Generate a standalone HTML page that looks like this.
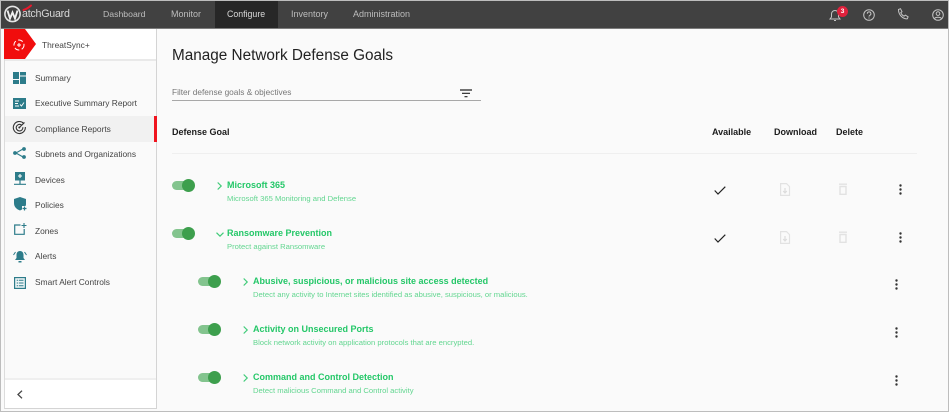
<!DOCTYPE html>
<html>
<head>
<meta charset="utf-8">
<style>
*{box-sizing:border-box}
html,body{margin:0;padding:0;width:950px;height:413px;overflow:hidden;background:#fff;font-family:"Liberation Sans",sans-serif}
.a{position:absolute;white-space:nowrap}
#frame{position:absolute;left:0;top:0;width:949px;height:412px;border:1px solid #bdbdbd;background:#fafafa;overflow:hidden}
.nav{position:absolute;top:8.500px;font-size:9px;line-height:11px;color:#bdbdbd;white-space:nowrap}
.mi{position:absolute;left:35px;font-size:8.4px;line-height:11px;color:#444;white-space:nowrap}
.t{position:absolute;font-size:9px;line-height:12px;font-weight:bold;color:#24c768;white-space:nowrap}
.s{position:absolute;font-size:7.65px;line-height:10px;color:#62d690;white-space:nowrap}
.th{position:absolute;top:127px;font-size:9px;line-height:11px;font-weight:bold;color:#1c1c1c;white-space:nowrap}
.tr{position:absolute;width:24px;height:13px}
.tr i{position:absolute;left:0;top:2px;width:20px;height:9px;border-radius:5px;background:#83c48e}
.tr b{position:absolute;left:10px;top:0;width:13px;height:13px;border-radius:50%;background:#3d9f4d}
svg{position:absolute;overflow:visible}
</style>
</head>
<body>
<div id="frame"></div>
<div class="a" style="left:1px;top:1px;width:947px;height:28px;background:#414141"></div>
<div class="a" style="left:1px;top:28px;width:947px;height:1px;background:#7c7c7c"></div>
<div class="a" style="left:215px;top:1px;width:63px;height:27px;background:#272727"></div>

<svg style="left:4px;top:5px" width="28" height="18" viewBox="0 0 28 18"><circle cx="8.500" cy="9" r="7.600" fill="none" stroke="#e5e5e5" stroke-width="1.600"/><path d="M3.500 5.500l2.500 8 2.500-6 2.500 6 2.500-8" fill="none" stroke="#f0f0f0" stroke-width="1.900"/><path d="M19.500 5Q24 3.500 27 .5" fill="none" stroke="#e8192c" stroke-width="2" stroke-linecap="round"/></svg>
<div class="a" style="left:22px;top:7px;font-size:10.700px;line-height:14px;color:#d8d8d8;letter-spacing:-.25px">atchGuard</div>

<div class="nav" style="left:103px;font-size:8.700px">Dashboard</div>
<div class="nav" style="left:171px">Monitor</div>
<div class="nav" style="left:227px;color:#d8d8d8;font-size:8.800px">Configure</div>
<div class="nav" style="left:291px">Inventory</div>
<div class="nav" style="left:353px">Administration</div>

<svg style="left:828px;top:8px" width="14" height="14" viewBox="0 0 14 14"><path d="M2 11h10l-1.500-2V6a3.500 3.500 0 0 0-7 0v3zM6 12.500h2" fill="none" stroke="#c4c4c4" stroke-width="1"/></svg>
<div class="a" style="left:837px;top:6px;width:11px;height:11px;border-radius:50%;background:#e0213c;color:#fff;font-size:6.500px;line-height:11px;text-align:center;font-weight:bold">3</div>
<svg style="left:863px;top:9px" width="12" height="12" viewBox="0 0 12 12"><circle cx="6" cy="6" r="5.300" fill="none" stroke="#c4c4c4" stroke-width="1"/><path d="M4.300 4.700a1.800 1.800 0 1 1 2.600 1.600c-.6.3-.9.700-.9 1.300M6 8.500v1" fill="none" stroke="#c4c4c4" stroke-width="1"/></svg>
<svg style="left:897px;top:8px" width="13" height="13" viewBox="0 0 13 13"><path d="M1.500 1.500l2-.8 1.500 3-1.200 1c.6 1.500 1.800 2.800 3.300 3.500l1.200-1.100 2.800 1.700-.8 2c-4.600.5-9-4.500-8.800-9.300z" fill="none" stroke="#c4c4c4" stroke-width="1"/></svg>
<svg style="left:932px;top:9px" width="12" height="12" viewBox="0 0 12 12"><circle cx="6" cy="6" r="5.300" fill="none" stroke="#c4c4c4" stroke-width="1"/><circle cx="6" cy="4.600" r="1.800" fill="none" stroke="#c4c4c4" stroke-width="1"/><path d="M2.500 9.500c1-1.700 6-1.700 7 0" fill="none" stroke="#c4c4c4" stroke-width="1"/></svg>

<!-- sidebar -->
<div class="a" style="left:4px;top:29px;width:153px;height:380px;background:#fafafa;border-left:1px solid #dcdcdc;border-right:1px solid #d4d4d4;border-bottom:1px solid #d4d4d4"></div>
<div class="a" style="left:5px;top:29px;width:151px;height:31px;background:#fff"></div>
<div class="a" style="left:5px;top:59px;width:151px;height:2px;background:#e9e9e9"></div>
<svg style="left:4px;top:29px" width="32" height="31" viewBox="0 0 32 31"><path d="M0 0h21l11 15-11 15H0z" fill="#f10d0d"/><circle cx="15" cy="16" r="5" fill="none" stroke="#fff" stroke-width="1" stroke-dasharray="5 2.500"/><path d="M13 16h4M15 14v4" stroke="#fff" stroke-width="1"/></svg>
<div class="a" style="left:42px;top:40px;font-size:8.400px;line-height:11px;color:#444">ThreatSync+</div>

<div class="a" style="left:5px;top:116px;width:150px;height:26px;background:#f1f1f1"></div>
<div class="a" style="left:154px;top:116px;width:3px;height:26px;background:#f0141e"></div>

<div style="position:absolute;left:0;top:0">
<div class="mi" style="top:72.500px">Summary</div>
<div class="mi" style="top:98px">Executive Summary Report</div>
<div class="mi" style="top:123.500px">Compliance Reports</div>
<div class="mi" style="top:149px">Subnets and Organizations</div>
<div class="mi" style="top:174.500px">Devices</div>
<div class="mi" style="top:200px">Policies</div>
<div class="mi" style="top:225.500px">Zones</div>
<div class="mi" style="top:251px">Alerts</div>
<div class="mi" style="top:277px">Smart Alert Controls</div>
</div>

<svg style="left:13px;top:72px" width="13" height="12" viewBox="0 0 13 12"><path d="M0 0h6v7H0zM7 0h6v3.500H7zM0 8h6v4H0zM7 4.500h6V12H7z" fill="#2d7c8a"/></svg>
<svg style="left:13px;top:98px" width="13" height="11" viewBox="0 0 13 11"><rect width="13" height="11" fill="#2d7c8a"/><path d="M2 3h4M2 5.500h3M2 8h4M7 6.500l1.500 1.500L11 4.500" fill="none" stroke="#fff" stroke-width=".9"/></svg>
<svg style="left:13px;top:121px" width="13" height="13" viewBox="0 0 13 13"><path d="M10.500 2.200A6 6 0 1 0 12.300 6M8.500 4a3.300 3.300 0 1 0 1.300 2.200" fill="none" stroke="#333" stroke-width="1.100"/><path d="M6.300 6.500L11.500 1.500" stroke="#333" stroke-width="1.200"/><circle cx="6.300" cy="6.500" r="1" fill="#333"/></svg>
<svg style="left:13px;top:147px" width="14" height="12" viewBox="0 0 14 12"><path d="M2 6h1l7-4M3 6l7 4" fill="none" stroke="#2d7c8a" stroke-width="1.100"/><circle cx="2" cy="6" r="1.900" fill="#2d7c8a"/><circle cx="11" cy="2" r="1.900" fill="#2d7c8a"/><circle cx="11" cy="10" r="1.900" fill="#2d7c8a"/></svg>
<svg style="left:14px;top:172px" width="12" height="13" viewBox="0 0 12 13"><path d="M1 0h10v8.500H1z" fill="#2d7c8a"/><path d="M6 2v4M4 4h4" stroke="#fff" stroke-width="1.100"/><path d="M6 8.500V12M0 12.300h12" stroke="#2d7c8a" stroke-width="1.200"/></svg>
<svg style="left:14px;top:197px" width="14" height="14" viewBox="0 0 14 14"><path d="M6 0l6 2v5c0 1-.2 1.500-.5 2H8v3.500L6 13.500C2 12 0 9.500 0 6V2z" fill="#2d7c8a"/><path d="M10.500 9.500v4M8.500 11.500h4" stroke="#2d7c8a" stroke-width="1.200"/></svg>
<svg style="left:14px;top:223px" width="12" height="12" viewBox="0 0 12 12"><path d="M6.500 2H.7v9.300h9.500V6" fill="none" stroke="#2d7c8a" stroke-width="1.200"/><path d="M10 0v5M7.500 2.500h5" stroke="#2d7c8a" stroke-width="1.100"/></svg>
<svg style="left:13px;top:250px" width="14" height="13" viewBox="0 0 14 13"><path d="M7 1c2.500 0 3.500 2 3.500 4v3l1.500 2H2l1.500-2V5C3.500 3 4.500 1 7 1z" fill="#2d7c8a"/><path d="M5.500 11h3v1.500h-3z" fill="#2d7c8a"/><path d="M2.500 2L.5 5M11.500 2l2 3" stroke="#2d7c8a" stroke-width="1"/></svg>
<svg style="left:13.500px;top:276.500px" width="12" height="12" viewBox="0 0 12 12"><rect x=".6" y=".6" width="10.800" height="10.800" fill="#eef5f6" stroke="#2d7c8a" stroke-width="1.200"/><path d="M2.700 3.300h1.500M2.700 6h1.500M2.700 8.700h1.500M5 3.300h4.500M5 6h4.500M5 8.700h4.500" stroke="#2d7c8a" stroke-width="1"/></svg>

<div class="a" style="left:5px;top:378px;width:151px;height:30px;background:#fff;border-top:2px solid #efefef"></div>
<svg style="left:17px;top:390px" width="6" height="9" viewBox="0 0 6 9"><path d="M5 .7L1 4.500 5 8.300" fill="none" stroke="#444" stroke-width="1.300"/></svg>

<!-- main -->
<div class="a" style="left:172px;top:46px;font-size:15.300px;line-height:20px;color:#222">Manage Network Defense Goals</div>
<div class="a" style="left:172px;top:86.500px;font-size:8.300px;line-height:11px;color:#777">Filter defense goals &amp; objectives</div>
<div class="a" style="left:172px;top:100px;width:309px;height:1px;background:#a8a8a8"></div>
<svg style="left:460px;top:89px" width="12" height="9" viewBox="0 0 12 9"><path d="M0 1h12M2 4.300h8M4.500 7.700h3" stroke="#222" stroke-width="1.200"/></svg>

<div class="th" style="left:172px">Defense Goal</div>
<div class="th" style="left:712px">Available</div>
<div class="th" style="left:774px">Download</div>
<div class="th" style="left:836px">Delete</div>
<div class="a" style="left:172px;top:153px;width:745px;height:1px;background:#efefef"></div>

<div class="tr" style="left:172px;top:179px"><i></i><b></b></div>
<div class="tr" style="left:172px;top:226.500px"><i></i><b></b></div>
<div class="tr" style="left:198px;top:275px"><i></i><b></b></div>
<div class="tr" style="left:198px;top:323px"><i></i><b></b></div>
<div class="tr" style="left:198px;top:371px"><i></i><b></b></div>

<svg style="left:217px;top:182px" width="5" height="8" viewBox="0 0 5 8"><path d="M.7.500l3.500 3.500-3.500 3.500" fill="none" stroke="#3fcb78" stroke-width="1.200"/></svg>
<svg style="left:216px;top:232px" width="8" height="5" viewBox="0 0 8 5"><path d="M.5.700L4 4.200 7.500.7" fill="none" stroke="#3fcb78" stroke-width="1.200"/></svg>
<svg style="left:243px;top:278px" width="5" height="8" viewBox="0 0 5 8"><path d="M.7.500l3.500 3.500-3.500 3.500" fill="none" stroke="#3fcb78" stroke-width="1.200"/></svg>
<svg style="left:243px;top:326px" width="5" height="8" viewBox="0 0 5 8"><path d="M.7.500l3.500 3.500-3.500 3.500" fill="none" stroke="#3fcb78" stroke-width="1.200"/></svg>
<svg style="left:243px;top:374px" width="5" height="8" viewBox="0 0 5 8"><path d="M.7.500l3.500 3.500-3.500 3.500" fill="none" stroke="#3fcb78" stroke-width="1.200"/></svg>

<div class="t" style="left:227px;top:179px">Microsoft 365</div>
<div class="s" style="left:227px;top:194px">Microsoft 365 Monitoring and Defense</div>
<div class="t" style="left:227px;top:227px">Ransomware Prevention</div>
<div class="s" style="left:227px;top:242px">Protect against Ransomware</div>
<div class="t" style="left:253px;top:275px">Abusive, suspicious, or malicious site access detected</div>
<div class="s" style="left:253px;top:290px">Detect any activity to Internet sites identified as abusive, suspicious, or malicious.</div>
<div class="t" style="left:253px;top:323px">Activity on Unsecured Ports</div>
<div class="s" style="left:253px;top:338px">Block network activity on application protocols that are encrypted.</div>
<div class="t" style="left:253px;top:371px">Command and Control Detection</div>
<div class="s" style="left:253px;top:386px">Detect malicious Command and Control activity</div>

<svg style="left:714px;top:186px" width="12" height="9" viewBox="0 0 12 9"><path d="M.7 4.500l3.300 3.500L11.300.7" fill="none" stroke="#222" stroke-width="1.200"/></svg>
<svg style="left:714px;top:234px" width="12" height="9" viewBox="0 0 12 9"><path d="M.7 4.500l3.300 3.500L11.300.7" fill="none" stroke="#222" stroke-width="1.200"/></svg>

<svg style="left:780px;top:182.500px" width="10" height="13" viewBox="0 0 10 13"><path d="M.6.600h5.900l3 3v8.800H.6z" fill="none" stroke="#e2e2e2" stroke-width="1.200"/><path d="M5 5v4.500M3.200 8l1.800 2 1.800-2" fill="none" stroke="#dcdcdc" stroke-width="1.200"/></svg>
<svg style="left:780px;top:230.500px" width="10" height="13" viewBox="0 0 10 13"><path d="M.6.600h5.900l3 3v8.800H.6z" fill="none" stroke="#e2e2e2" stroke-width="1.200"/><path d="M5 5v4.500M3.200 8l1.800 2 1.800-2" fill="none" stroke="#dcdcdc" stroke-width="1.200"/></svg>
<svg style="left:839px;top:183px" width="8" height="12" viewBox="0 0 8 12"><path d="M1 3.500h6v7.800H1zM0 1.200h8" fill="none" stroke="#e2e2e2" stroke-width="1.400"/></svg>
<svg style="left:839px;top:231px" width="8" height="12" viewBox="0 0 8 12"><path d="M1 3.500h6v7.800H1zM0 1.200h8" fill="none" stroke="#e2e2e2" stroke-width="1.400"/></svg>

<svg style="left:899px;top:183.500px" width="3" height="11" viewBox="0 0 3 11"><circle cx="1.500" cy="1.500" r="1.200" fill="#333"/><circle cx="1.500" cy="5.500" r="1.200" fill="#333"/><circle cx="1.500" cy="9.500" r="1.200" fill="#333"/></svg>
<svg style="left:899px;top:231.500px" width="3" height="11" viewBox="0 0 3 11"><circle cx="1.500" cy="1.500" r="1.200" fill="#333"/><circle cx="1.500" cy="5.500" r="1.200" fill="#333"/><circle cx="1.500" cy="9.500" r="1.200" fill="#333"/></svg>
<svg style="left:895px;top:279px" width="3" height="11" viewBox="0 0 3 11"><circle cx="1.500" cy="1.500" r="1.200" fill="#333"/><circle cx="1.500" cy="5.500" r="1.200" fill="#333"/><circle cx="1.500" cy="9.500" r="1.200" fill="#333"/></svg>
<svg style="left:895px;top:327px" width="3" height="11" viewBox="0 0 3 11"><circle cx="1.500" cy="1.500" r="1.200" fill="#333"/><circle cx="1.500" cy="5.500" r="1.200" fill="#333"/><circle cx="1.500" cy="9.500" r="1.200" fill="#333"/></svg>
<svg style="left:895px;top:375px" width="3" height="11" viewBox="0 0 3 11"><circle cx="1.500" cy="1.500" r="1.200" fill="#333"/><circle cx="1.500" cy="5.500" r="1.200" fill="#333"/><circle cx="1.500" cy="9.500" r="1.200" fill="#333"/></svg>
</body>
</html>
